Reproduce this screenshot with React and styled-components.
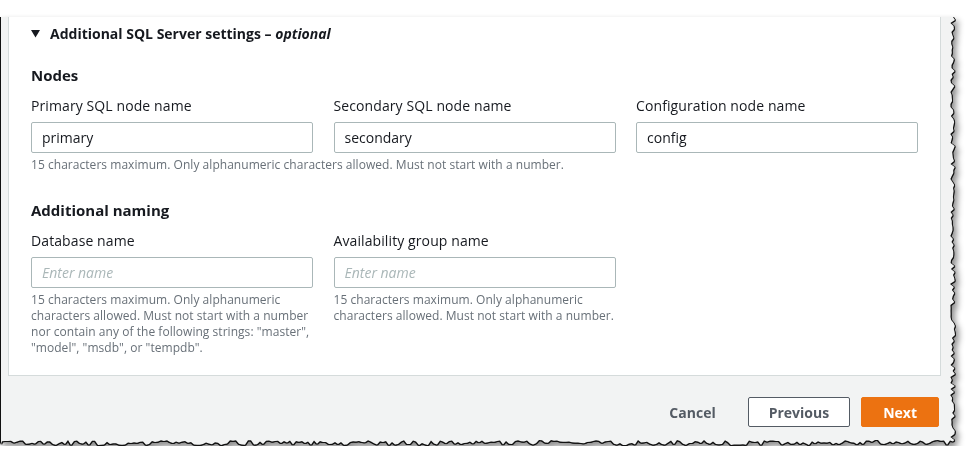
import React from "react";
import styled, { createGlobalStyle } from "styled-components";

const GlobalStyle = createGlobalStyle`
  html, body {
    margin: 0;
    padding: 0;
    background: #ffffff;
  }
  body {
    font-family: "Open Sans", "Liberation Sans", Arial, sans-serif;
    color: #16191f;
  }
`;

const FRAME_W = 955;
const FRAME_H = 429;

// jagged "torn paper" outline for the right and bottom edges
const tornEdge = () => {
  let seed = 7;
  const rand = () => {
    seed = (seed * 16807) % 2147483647;
    return seed / 2147483647;
  };
  const pts = ["0px 0px", `${FRAME_W - 3}px 0px`];
  for (let y = 3; y < FRAME_H - 4; y += 3) {
    const x = FRAME_W - 1 - rand() * 5;
    pts.push(`${x.toFixed(1)}px ${y}px`);
  }
  for (let x = FRAME_W - 3; x > 0; x -= 3) {
    const y = FRAME_H - 1 - rand() * 5;
    pts.push(`${x}px ${y.toFixed(1)}px`);
  }
  pts.push(`0px ${FRAME_H - 2}px`);
  return `polygon(${pts.join(", ")})`;
};

const clipPath = tornEdge();

const fields = {
  nodes: [
    { label: "Primary SQL node name", value: "primary" },
    { label: "Secondary SQL node name", value: "secondary" },
    { label: "Configuration node name", value: "config" },
  ],
  naming: [
    {
      label: "Database name",
      hint:
        '15 characters maximum. Only alphanumeric characters allowed. Must not start with a number nor contain any of the following strings: "master", "model", "msdb", or "tempdb".',
    },
    {
      label: "Availability group name",
      hint:
        "15 characters maximum. Only alphanumeric characters allowed. Must not start with a number.",
    },
  ],
};

const App = () => {
  return (
    <>
      <GlobalStyle />
      <Shadow>
        <Frame style={{ clipPath }}>
          <Card>
            <Expander>
              <svg width="9" height="8" viewBox="0 0 9 8">
                <polygon points="0,0 9,0 4.5,7.5" fill="#16191f" />
              </svg>
              <span>
                Additional SQL Server settings – <em>optional</em>
              </span>
            </Expander>

            <Heading $top={22}>Nodes</Heading>
            <Grid>
              {fields.nodes.map((f) => (
                <Field key={f.label}>
                  <Label>{f.label}</Label>
                  <Input defaultValue={f.value} />
                </Field>
              ))}
            </Grid>
            <Hint>
              15 characters maximum. Only alphanumeric characters allowed. Must
              not start with a number.
            </Hint>

            <Heading $top={27}>Additional naming</Heading>
            <Grid>
              {fields.naming.map((f) => (
                <Field key={f.label}>
                  <Label>{f.label}</Label>
                  <Input placeholder="Enter name" />
                  <Hint>{f.hint}</Hint>
                </Field>
              ))}
            </Grid>
          </Card>

          <Footer>
            <Button $variant="link">Cancel</Button>
            <Button>Previous</Button>
            <Button $variant="primary">Next</Button>
          </Footer>
        </Frame>
      </Shadow>
    </>
  );
};

const Shadow = styled.div`
  margin: 17px 0 0 1px;
  width: ${FRAME_W}px;
  height: ${FRAME_H}px;
  filter: drop-shadow(-1px 0 0 #111) drop-shadow(1px 0 0 #111)
    drop-shadow(0 1px 0 #111) drop-shadow(3px 4px 3px rgba(0, 0, 0, 0.45));
`;

const Frame = styled.div`
  width: ${FRAME_W}px;
  height: ${FRAME_H}px;
  box-sizing: border-box;
  background: #f2f3f3;
  padding: 0 15px 0 7px;
`;

const Card = styled.div`
  background: #ffffff;
  border: 1px solid #d5dbdb;
  border-top: none;
  padding: 6px 22px 19px 22px;
  height: 359px;
  box-sizing: border-box;
`;

const Expander = styled.div`
  display: flex;
  align-items: center;
  gap: 10px;
  height: 20px;
  font-size: 14px;
  font-weight: 700;
  svg {
    margin-top: 1px;
  }
  em {
    font-style: italic;
  }
`;

const Heading = styled.h3`
  margin: ${(p) => p.$top}px 0 0;
  font-size: 15px;
  line-height: 20px;
  font-weight: 700;
`;

const Grid = styled.div`
  display: grid;
  grid-template-columns: repeat(3, 282px);
  column-gap: 20.5px;
  margin-top: 11px;
`;

const Field = styled.div`
  display: flex;
  flex-direction: column;
`;

const Label = styled.label`
  font-size: 14px;
  line-height: 20px;
  margin-bottom: 6px;
  letter-spacing: 0.1px;
`;

const Input = styled.input`
  box-sizing: border-box;
  height: 31px;
  width: 100%;
  border: 1px solid #aab7b8;
  border-radius: 2px;
  padding: 0 10px;
  font-family: inherit;
  font-size: 14px;
  color: #16191f;
  background: #ffffff;
  outline: none;
  &::placeholder {
    color: #aab7b8;
    font-style: italic;
  }
`;

const Hint = styled.div`
  margin-top: 4px;
  font-size: 12px;
  line-height: 16px;
  color: #687078;
  letter-spacing: 0.04px;
`;

const Footer = styled.div`
  display: flex;
  justify-content: flex-end;
  align-items: center;
  gap: 11px;
  margin-top: 21px;
  padding-right: 2px;
`;

const Button = styled.button`
  box-sizing: border-box;
  height: 30px;
  padding: 0 ${(p) => (p.$variant === "primary" ? 21 : 20)}px;
  font-family: inherit;
  font-size: 14px;
  font-weight: 700;
  border-radius: 2px;
  cursor: pointer;
  color: ${(p) => (p.$variant === "primary" ? "#ffffff" : "#545b64")};
  background: ${(p) =>
    p.$variant === "primary"
      ? "#ec7211"
      : p.$variant === "link"
      ? "transparent"
      : "#ffffff"};
  border: 1px solid
    ${(p) =>
      p.$variant === "primary"
        ? "#ec7211"
        : p.$variant === "link"
        ? "transparent"
        : "#545b64"};
`;

export default App;
